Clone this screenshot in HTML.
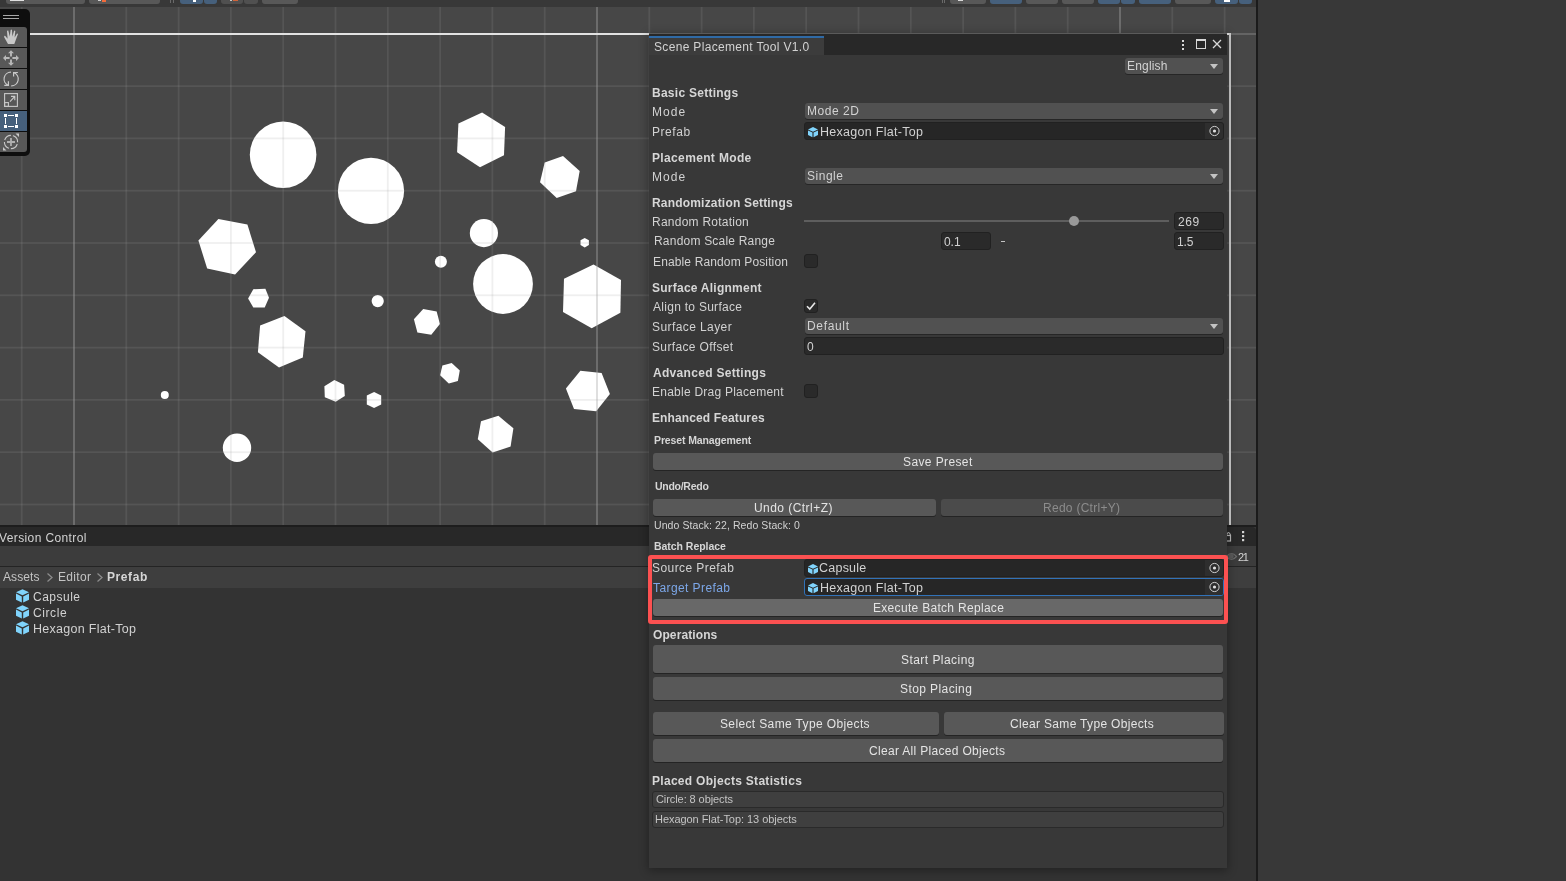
<!DOCTYPE html>
<html><head><meta charset="utf-8"><style>
*{box-sizing:border-box;margin:0;padding:0}
html,body{width:1566px;height:881px;overflow:hidden;background:#383838;font-family:"Liberation Sans",sans-serif;font-size:12px;color:#d2d2d2}
.a{position:absolute}
.t{position:absolute;white-space:pre;line-height:14px;will-change:transform}
.b{font-weight:bold}
.dd{position:absolute;background:#515151;border-radius:3px;box-shadow:0 1px 0 #262626}
.fld{position:absolute;background:#2a2a2a;border:1px solid #212121;border-radius:3px}
.btn{position:absolute;background:#585858;border-radius:3px;box-shadow:0 1px 0 #242424}
.arr{position:absolute;width:0;height:0;border-left:4.5px solid transparent;border-right:4.5px solid transparent;border-top:5px solid #c4c4c4}
</style></head><body>
<div class="a" style="left:0px;top:0px;width:1256px;height:7px;background:#383838;"></div>
<div class="a" style="left:6px;top:-3px;width:79px;height:7px;background:#585858;border-radius:3px"></div>
<div class="a" style="left:89px;top:-3px;width:71px;height:7px;background:#585858;border-radius:3px"></div>
<div class="a" style="left:180px;top:-3px;width:23px;height:7px;background:#46607c;border-radius:3px"></div>
<div class="a" style="left:204px;top:-3px;width:13px;height:7px;background:#46607c;border-radius:3px"></div>
<div class="a" style="left:221px;top:-3px;width:22px;height:7px;background:#505050;border-radius:3px"></div>
<div class="a" style="left:244px;top:-3px;width:14px;height:7px;background:#505050;border-radius:3px"></div>
<div class="a" style="left:262px;top:-3px;width:36px;height:7px;background:#585858;border-radius:3px"></div>
<div class="a" style="left:950px;top:-3px;width:36px;height:7px;background:#585858;border-radius:3px"></div>
<div class="a" style="left:990px;top:-3px;width:32px;height:7px;background:#46607c;border-radius:3px"></div>
<div class="a" style="left:1026px;top:-3px;width:32px;height:7px;background:#585858;border-radius:3px"></div>
<div class="a" style="left:1062px;top:-3px;width:32px;height:7px;background:#585858;border-radius:3px"></div>
<div class="a" style="left:1098px;top:-3px;width:22px;height:7px;background:#46607c;border-radius:3px"></div>
<div class="a" style="left:1121px;top:-3px;width:14px;height:7px;background:#46607c;border-radius:3px"></div>
<div class="a" style="left:1139px;top:-3px;width:32px;height:7px;background:#46607c;border-radius:3px"></div>
<div class="a" style="left:1175px;top:-3px;width:36px;height:7px;background:#585858;border-radius:3px"></div>
<div class="a" style="left:1215px;top:-3px;width:23px;height:7px;background:#46607c;border-radius:3px"></div>
<div class="a" style="left:1239px;top:-3px;width:13px;height:7px;background:#46607c;border-radius:3px"></div>
<div class="a" style="left:10px;top:0px;width:14px;height:1px;background:#e0e0e0;"></div>
<div class="a" style="left:98px;top:0px;width:3px;height:1px;background:#d0d0d0;"></div>
<div class="a" style="left:102px;top:0px;width:4px;height:1.5px;background:#f26b3a;"></div>
<div class="a" style="left:193px;top:0px;width:3px;height:1.5px;background:#ffffff;"></div>
<div class="a" style="left:170px;top:0px;width:1px;height:3px;background:#6a6a6a;"></div>
<div class="a" style="left:173px;top:0px;width:1px;height:3px;background:#6a6a6a;"></div>
<div class="a" style="left:230px;top:0px;width:2px;height:1px;background:#c8c8c8;"></div>
<div class="a" style="left:233px;top:0px;width:5px;height:1.2px;background:#d0643a;"></div>
<div class="a" style="left:958px;top:0px;width:5px;height:1.2px;background:#d8d8d8;"></div>
<div class="a" style="left:942px;top:0px;width:1px;height:3px;background:#6a6a6a;"></div>
<div class="a" style="left:944px;top:0px;width:1px;height:3px;background:#6a6a6a;"></div>
<div class="a" style="left:1224px;top:0px;width:6px;height:1.5px;background:#ffffff;"></div>
<svg class="a" style="left:0;top:7px" width="1256" height="518" viewBox="0 7 1256 518"><rect x="0" y="7" width="1256" height="518" fill="#474747"/><circle cx="283.1" cy="154.7" r="33.3" fill="#fff"/><circle cx="371" cy="190.9" r="33.1" fill="#fff"/><circle cx="483.9" cy="233.1" r="14.1" fill="#fff"/><circle cx="440.9" cy="261.8" r="6" fill="#fff"/><circle cx="377.7" cy="301.1" r="6.1" fill="#fff"/><circle cx="503" cy="284" r="29.9" fill="#fff"/><circle cx="164.8" cy="394.9" r="4" fill="#fff"/><circle cx="237" cy="447.8" r="14.2" fill="#fff"/><polygon fill="#fff" points="218.4,218.9 247.4,224.6 256,252.2 235.1,274.6 207.2,268.5 198.4,240.5"/><polygon fill="#fff" points="482.1,112.5 505.1,126.9 504,155.3 480,167.3 457.1,152.2 458.4,123.5"/><polygon fill="#fff" points="563,156.1 579.7,171 576,191.3 556.7,197.9 540,182.2 544.7,162.6"/><polygon fill="#fff" points="593.5,264.4 621,280 620.4,312.7 591.7,328.3 563,311.9 564,278.8"/><polygon fill="#fff" points="284.4,315.9 305.5,331.3 302.8,357.4 279,367.6 257.9,352.2 260.1,325.6"/><polygon fill="#fff" points="334.4,380.1 344.1,384.7 344.8,396 335.7,401.7 324.8,397.2 324.4,386.3"/><polygon fill="#fff" points="374.1,391.9 381.2,395.6 381.2,404.4 374.1,408 366.8,404.4 366.8,395.6"/><polygon fill="#fff" points="423.2,309.1 436.7,311.6 439.9,324.1 431.3,334.7 417.4,332.4 413.9,319.3"/><polygon fill="#fff" points="451.7,363.1 459.8,370.4 457.9,381 448.8,383.5 440.1,375.2 442.4,365.6"/><polygon fill="#fff" points="580.4,370.8 601.6,372.9 609.9,394 596.2,411.3 574,409 565.9,388.4"/><polygon fill="#fff" points="498.4,415.8 513.4,428.3 510.6,446.6 492.6,452.4 477.8,439.3 481,421.2"/><polygon fill="#fff" points="253.3,289.2 265.4,288.8 269,297.7 264.7,307.5 253.3,307.5 248.1,298.4"/><polygon fill="#fff" points="584.7,237.9 588.9,240.3 588.9,245.1 584.7,247.5 580.5,245.1 580.5,240.3"/><rect x="20.8" y="7" width="1.8" height="518" fill="rgba(155,155,155,0.165)"/><rect x="73.1" y="7" width="1.8" height="518" fill="rgba(170,170,170,0.42)"/><rect x="125.4" y="7" width="1.8" height="518" fill="rgba(155,155,155,0.165)"/><rect x="177.7" y="7" width="1.8" height="518" fill="rgba(155,155,155,0.165)"/><rect x="230.0" y="7" width="1.8" height="518" fill="rgba(155,155,155,0.165)"/><rect x="282.3" y="7" width="1.8" height="518" fill="rgba(155,155,155,0.165)"/><rect x="334.6" y="7" width="1.8" height="518" fill="rgba(155,155,155,0.165)"/><rect x="386.9" y="7" width="1.8" height="518" fill="rgba(155,155,155,0.165)"/><rect x="439.2" y="7" width="1.8" height="518" fill="rgba(155,155,155,0.165)"/><rect x="491.5" y="7" width="1.8" height="518" fill="rgba(155,155,155,0.165)"/><rect x="543.8" y="7" width="1.8" height="518" fill="rgba(155,155,155,0.165)"/><rect x="596.1" y="7" width="1.8" height="518" fill="rgba(170,170,170,0.42)"/><rect x="648.4" y="7" width="1.8" height="518" fill="rgba(155,155,155,0.165)"/><rect x="700.7" y="7" width="1.8" height="518" fill="rgba(155,155,155,0.165)"/><rect x="753.0" y="7" width="1.8" height="518" fill="rgba(155,155,155,0.165)"/><rect x="805.3" y="7" width="1.8" height="518" fill="rgba(155,155,155,0.165)"/><rect x="857.6" y="7" width="1.8" height="518" fill="rgba(155,155,155,0.165)"/><rect x="909.9" y="7" width="1.8" height="518" fill="rgba(155,155,155,0.165)"/><rect x="962.2" y="7" width="1.8" height="518" fill="rgba(155,155,155,0.165)"/><rect x="1014.5" y="7" width="1.8" height="518" fill="rgba(155,155,155,0.165)"/><rect x="1066.8" y="7" width="1.8" height="518" fill="rgba(155,155,155,0.165)"/><rect x="1119.1" y="7" width="1.8" height="518" fill="rgba(170,170,170,0.42)"/><rect x="1171.4" y="7" width="1.8" height="518" fill="rgba(155,155,155,0.165)"/><rect x="1223.7" y="7" width="1.8" height="518" fill="rgba(155,155,155,0.165)"/><rect x="0" y="85.2" width="1256" height="1.8" fill="rgba(155,155,155,0.165)"/><rect x="0" y="137.5" width="1256" height="1.8" fill="rgba(155,155,155,0.165)"/><rect x="0" y="189.8" width="1256" height="1.8" fill="rgba(155,155,155,0.165)"/><rect x="0" y="242.1" width="1256" height="1.8" fill="rgba(155,155,155,0.165)"/><rect x="0" y="294.4" width="1256" height="1.8" fill="rgba(155,155,155,0.165)"/><rect x="0" y="346.7" width="1256" height="1.8" fill="rgba(155,155,155,0.165)"/><rect x="0" y="399.0" width="1256" height="1.8" fill="rgba(155,155,155,0.165)"/><rect x="0" y="451.3" width="1256" height="1.8" fill="rgba(155,155,155,0.165)"/><rect x="0" y="503.6" width="1256" height="1.8" fill="rgba(155,155,155,0.165)"/><rect x="0" y="33" width="1256" height="2" fill="rgba(170,170,170,0.30)"/><rect x="30" y="33" width="1201" height="2" fill="#e2e2e2"/><rect x="1229" y="33" width="2" height="492" fill="#cfcfcf"/></svg>
<div class="a" style="left:0px;top:9px;width:30px;height:147px;background:#0e0e0e;border-radius:0 5px 5px 0"></div>
<div class="a" style="left:3px;top:15px;width:16px;height:1px;background:#a8a8a8;"></div>
<div class="a" style="left:3px;top:18px;width:16px;height:1px;background:#a8a8a8;"></div>
<div class="a" style="left:0px;top:27px;width:27px;height:20px;background:#585858;border-radius:0 3px 0 0"></div>
<div class="a" style="left:0px;top:48px;width:27px;height:20px;background:#585858;border-radius:0"></div>
<div class="a" style="left:0px;top:69px;width:27px;height:20px;background:#585858;border-radius:0"></div>
<div class="a" style="left:0px;top:90px;width:27px;height:20px;background:#585858;border-radius:0"></div>
<div class="a" style="left:0px;top:111px;width:27px;height:20px;background:#46607c;border-radius:0"></div>
<div class="a" style="left:0px;top:132px;width:27px;height:20px;background:#585858;border-radius:0 0 3px 0"></div>
<svg class="a" style="left:0;top:0" width="30" height="160"><path d="M8 44 L4.2 37.2 Q3.8 35.6 5.3 35.9 L7.6 38.8 L7 31.2 Q7.3 30 8.3 30.6 L9.8 36.5 L10.6 29.9 Q11.3 29 12 29.9 L12.4 36.5 L14 31 Q14.7 30.2 15.3 31 L14.6 37.5 L16.9 33.8 Q17.7 33.2 18 34.1 L15.6 40.5 L14.3 44 Z" fill="#c8c8c8"/><g stroke="#b8b8b8" stroke-width="1.9" fill="none" stroke-linecap="butt"><path d="M11 52 L11 56.6 M11 59.4 L11 64 M5 58 L9.6 58 M12.4 58 L17 58"/></g><g fill="#b8b8b8"><path d="M11 50.2 L14 53.2 L8 53.2Z M11 65.8 L14 62.8 L8 62.8Z M3 58 L6 55 L6 61Z M19 58 L16 55 L16 61Z"/></g><g stroke="#c8c8c8" stroke-width="1.2" fill="none"><path d="M11 72.2 A6.8 6.8 0 0 0 8.3 85.3"/><path d="M4.3 85.4 L8.4 85.4 L8.4 81.3"/><path d="M11.2 85.8 A6.8 6.8 0 0 0 13.7 72.6"/><path d="M17.9 72.5 L13.6 72.5 L13.6 76.4"/></g><g stroke="#c8c8c8" stroke-width="1.1" fill="none"><rect x="4.6" y="93.6" width="12.8" height="12.8"/><rect x="4.6" y="102.6" width="3.8" height="3.8"/><path d="M10 101.6 L14.6 96.6 M11 96.4 L14.8 96.4 L14.8 100.2"/></g><g fill="#fff"><rect x="4" y="114" width="3" height="3"/><rect x="15" y="114" width="3" height="3"/><rect x="4" y="125" width="3" height="3"/><rect x="15" y="125" width="3" height="3"/><rect x="8" y="115" width="6" height="1"/><rect x="8" y="126" width="6" height="1"/><rect x="5" y="118" width="1" height="6"/><rect x="16" y="118" width="1" height="6"/></g><g stroke="#c8c8c8" stroke-width="1.1" fill="none" stroke-dasharray="8.2 2"><circle cx="11" cy="142" r="6.6" transform="rotate(-70 11 142)"/></g><g stroke="#b0b0b0" stroke-width="1.8"><path d="M11 138 L11 146 M7 142 L15 142"/></g><g fill="#c8c8c8"><path d="M3 150.5 L3 147 L6.5 150.5Z M19 133.5 L19 137 L15.5 133.5Z"/></g></svg>
<div class="a" style="left:1256px;top:0px;width:2px;height:881px;background:#1b1b1b;"></div>
<div class="a" style="left:1258px;top:0px;width:308px;height:881px;background:#383838;"></div>
<div class="a" style="left:0px;top:525px;width:1256px;height:2px;background:#1d1d1d;"></div>
<div class="a" style="left:0px;top:527px;width:1256px;height:19px;background:#282828;border-top-right-radius:4px"></div>
<div class="a" style="left:0px;top:546px;width:1256px;height:20px;background:#3c3c3c;"></div>
<div class="a" style="left:0px;top:566px;width:1256px;height:1px;background:#242424;"></div>
<div class="a" style="left:0px;top:567px;width:1256px;height:21px;background:#3e3e3e;"></div>
<div class="a" style="left:0px;top:588px;width:1256px;height:293px;background:#333333;"></div>
<svg class="a" style="left:0;top:560px" width="120" height="30"><path d="M47.5 13.5 L52 17.5 L47.5 21.5 M97.5 13.5 L102 17.5 L97.5 21.5" stroke="#8c8c8c" stroke-width="1.3" fill="none"/></svg>
<svg class="a" style="left:1220px;top:525px" width="36" height="45"><path d="M6.5 10 Q8.5 5 10.5 10" stroke="#bbb" stroke-width="1.2" fill="none"/><rect x="5.5" y="10.5" width="5" height="5.5" stroke="#bbb" stroke-width="1.2" fill="none"/><rect x="22" y="6" width="2.2" height="2.2" fill="#d2d2d2"/><rect x="22" y="10" width="2.2" height="2.2" fill="#d2d2d2"/><rect x="22" y="14" width="2.2" height="2.2" fill="#d2d2d2"/><path d="M6.5 31.5 Q11.5 25.5 16.5 31.5 Q11.5 37.5 6.5 31.5Z" stroke="#6a6a6a" stroke-width="1.2" fill="none"/><circle cx="11" cy="31.2" r="2.6" fill="#5a5a5a"/></svg>
<svg class="a" style="left:0;top:0" width="40" height="881"><polygon fill="#80d4fc" points="22.50,589.20 29.00,592.32 22.50,595.31 16.00,592.32"/><polygon fill="#80d4fc" points="16.00,593.62 21.79,596.48 21.79,602.59 16.00,599.73"/><polygon fill="#80d4fc" points="23.21,596.48 29.00,593.62 29.00,599.73 23.21,602.59"/><polygon fill="#80d4fc" points="22.50,605.20 29.00,608.32 22.50,611.31 16.00,608.32"/><polygon fill="#80d4fc" points="16.00,609.62 21.79,612.48 21.79,618.59 16.00,615.73"/><polygon fill="#80d4fc" points="23.21,612.48 29.00,609.62 29.00,615.73 23.21,618.59"/><polygon fill="#80d4fc" points="22.50,621.20 29.00,624.32 22.50,627.31 16.00,624.32"/><polygon fill="#80d4fc" points="16.00,625.62 21.79,628.48 21.79,634.59 16.00,631.73"/><polygon fill="#80d4fc" points="23.21,628.48 29.00,625.62 29.00,631.73 23.21,634.59"/></svg>
<div class="a" style="left:649px;top:33px;width:578px;height:835px;background:#383838;box-shadow:0 2px 9px 1px rgba(0,0,0,0.32)"></div>
<div class="a" style="left:649px;top:33px;width:578px;height:1px;background:#5a5a5a;"></div>
<div class="a" style="left:649px;top:34px;width:578px;height:21px;background:#282828;"></div>
<div class="a" style="left:649px;top:38px;width:175px;height:17px;background:#3c3c3c;"></div>
<div class="a" style="left:649px;top:36px;width:175px;height:2px;background:#2f6aa6;"></div>
<svg class="a" style="left:1176px;top:34px" width="52" height="21"><rect x="6" y="6" width="2" height="2" fill="#d8d8d8"/><rect x="6" y="10" width="2" height="2" fill="#d8d8d8"/><rect x="6" y="14" width="2" height="2" fill="#d8d8d8"/><rect x="20.5" y="5.5" width="9" height="9" stroke="#d8d8d8" stroke-width="1" fill="none"/><rect x="20" y="5" width="10" height="2" fill="#d8d8d8"/><path d="M37 6 L45 14 M45 6 L37 14" stroke="#d8d8d8" stroke-width="1.3"/></svg>
<div class="dd" style="left:1125px;top:58px;width:98px;height:16px"></div>
<div class="arr" style="left:1210px;top:64px"></div>
<div class="dd" style="left:805px;top:103px;width:418px;height:16px"></div>
<div class="arr" style="left:1210px;top:109px"></div>
<div class="a" style="left:804px;top:122px;width:420px;height:18px;background:#262626;border:1px solid #212121;border-radius:3px"></div>
<div class="a" style="left:1205px;top:123px;width:18px;height:16px;background:#2e2e2e;border-radius:0 2px 2px 0"></div>
<svg class="a" style="left:1205px;top:122px" width="19" height="18"><circle cx="9.5" cy="9.0" r="4.6" stroke="#d0d0d0" stroke-width="1" fill="none"/><circle cx="9.5" cy="9.0" r="1.6" fill="#e0e0e0"/></svg>
<svg class="a" style="left:808px;top:127px" width="11" height="11"><polygon fill="#80d4fc" points="5.00,0.00 10.00,2.40 5.00,4.70 0.00,2.40"/><polygon fill="#80d4fc" points="0.00,3.40 4.45,5.60 4.45,10.30 0.00,8.10"/><polygon fill="#80d4fc" points="5.55,5.60 10.00,3.40 10.00,8.10 5.55,10.30"/></svg>
<div class="dd" style="left:805px;top:168px;width:418px;height:16px"></div>
<div class="arr" style="left:1210px;top:174px"></div>
<div class="a" style="left:804px;top:220px;width:365px;height:2px;background:#5e5e5e;"></div>
<div class="a" style="left:1068.8px;top:215.8px;width:10.2px;height:10.2px;border-radius:50%;background:#999999"></div>
<div class="fld" style="left:1174px;top:212px;width:50px;height:18px"></div>
<div class="fld" style="left:941px;top:232px;width:50px;height:18px"></div>
<div class="a" style="left:1001px;top:241px;width:4px;height:1px;background:#c4c4c4;"></div>
<div class="fld" style="left:1174px;top:232px;width:50px;height:18px"></div>
<div class="fld" style="left:804px;top:254px;width:14px;height:14px"></div>
<div class="fld" style="left:804px;top:299px;width:14px;height:14px"></div>
<svg class="a" style="left:804px;top:299px" width="14" height="14"><path d="M3 7.2 L5.8 10 L11 3.8" stroke="#e8e8e8" stroke-width="1.6" fill="none"/></svg>
<div class="dd" style="left:805px;top:318px;width:418px;height:16px"></div>
<div class="arr" style="left:1210px;top:324px"></div>
<div class="fld" style="left:804px;top:337px;width:420px;height:18px"></div>
<div class="fld" style="left:804px;top:384px;width:14px;height:14px"></div>
<div class="btn" style="left:653px;top:453px;width:570px;height:17px;background:#585858"></div>
<div class="btn" style="left:653px;top:499px;width:283px;height:17px;background:#585858"></div>
<div class="btn" style="left:941px;top:499px;width:282px;height:17px;background:#4b4b4b"></div>
<div class="a" style="left:648px;top:555px;width:580px;height:69px;border:4px solid #fc5151;border-radius:3px"></div>
<div class="a" style="left:804px;top:559px;width:420px;height:18px;background:#262626;border:1px solid #212121;border-radius:3px"></div>
<div class="a" style="left:1205px;top:560px;width:18px;height:16px;background:#2e2e2e;border-radius:0 2px 2px 0"></div>
<svg class="a" style="left:1205px;top:559px" width="19" height="18"><circle cx="9.5" cy="9.0" r="4.6" stroke="#d0d0d0" stroke-width="1" fill="none"/><circle cx="9.5" cy="9.0" r="1.6" fill="#e0e0e0"/></svg>
<svg class="a" style="left:808px;top:564px" width="11" height="11"><polygon fill="#80d4fc" points="5.00,0.00 10.00,2.40 5.00,4.70 0.00,2.40"/><polygon fill="#80d4fc" points="0.00,3.40 4.45,5.60 4.45,10.30 0.00,8.10"/><polygon fill="#80d4fc" points="5.55,5.60 10.00,3.40 10.00,8.10 5.55,10.30"/></svg>
<div class="a" style="left:804px;top:578px;width:420px;height:18px;background:#262626;border:1px solid #3172b8;border-radius:3px"></div>
<div class="a" style="left:1205px;top:579px;width:18px;height:16px;background:#2e2e2e;border-radius:0 2px 2px 0"></div>
<svg class="a" style="left:1205px;top:578px" width="19" height="18"><circle cx="9.5" cy="9.0" r="4.6" stroke="#d0d0d0" stroke-width="1" fill="none"/><circle cx="9.5" cy="9.0" r="1.6" fill="#e0e0e0"/></svg>
<svg class="a" style="left:808px;top:583px" width="11" height="11"><polygon fill="#80d4fc" points="5.00,0.00 10.00,2.40 5.00,4.70 0.00,2.40"/><polygon fill="#80d4fc" points="0.00,3.40 4.45,5.60 4.45,10.30 0.00,8.10"/><polygon fill="#80d4fc" points="5.55,5.60 10.00,3.40 10.00,8.10 5.55,10.30"/></svg>
<div class="btn" style="left:653px;top:599px;width:570px;height:17px;background:#686868"></div>
<div class="btn" style="left:653px;top:645px;width:570px;height:28px;background:#585858"></div>
<div class="btn" style="left:653px;top:677px;width:570px;height:23px;background:#585858"></div>
<div class="btn" style="left:653px;top:712px;width:286px;height:23px;background:#585858"></div>
<div class="btn" style="left:944px;top:712px;width:280px;height:23px;background:#585858"></div>
<div class="btn" style="left:653px;top:739px;width:570px;height:23px;background:#585858"></div>
<div class="a" style="left:652px;top:791px;width:572px;height:17px;background:#3f3f3f;border:1px solid #2a2a2a;border-radius:3px"></div>
<div class="a" style="left:652px;top:811px;width:572px;height:17px;background:#3f3f3f;border:1px solid #2a2a2a;border-radius:3px"></div>
<div class="t" style="left:654.40px;top:40px;font-size:12px;color:#d2d2d2;letter-spacing:0.329px;">Scene Placement Tool V1.0</div>
<div class="t" style="left:1127.40px;top:59px;font-size:12px;color:#d2d2d2;letter-spacing:0.183px;">English</div>
<div class="t" style="left:652.20px;top:86px;font-size:12px;color:#d6d6d6;letter-spacing:0.262px;font-weight:700;">Basic Settings</div>
<div class="t" style="left:652.20px;top:105px;font-size:12px;color:#d2d2d2;letter-spacing:1.067px;">Mode</div>
<div class="t" style="left:807.00px;top:104px;font-size:12px;color:#d2d2d2;letter-spacing:0.517px;">Mode 2D</div>
<div class="t" style="left:652.20px;top:125px;font-size:12px;color:#d2d2d2;letter-spacing:0.560px;">Prefab</div>
<div class="t" style="left:819.70px;top:125px;font-size:12.5px;color:#d2d2d2;letter-spacing:0.293px;">Hexagon Flat-Top</div>
<div class="t" style="left:652.20px;top:151px;font-size:12px;color:#d6d6d6;letter-spacing:0.354px;font-weight:700;">Placement Mode</div>
<div class="t" style="left:652.20px;top:170px;font-size:12px;color:#d2d2d2;letter-spacing:1.067px;">Mode</div>
<div class="t" style="left:807.00px;top:169px;font-size:12px;color:#d2d2d2;letter-spacing:0.520px;">Single</div>
<div class="t" style="left:652.20px;top:196px;font-size:12px;color:#d6d6d6;letter-spacing:0.186px;font-weight:700;">Randomization Settings</div>
<div class="t" style="left:652.20px;top:215px;font-size:12px;color:#d2d2d2;letter-spacing:0.243px;">Random Rotation</div>
<div class="t" style="left:1177.70px;top:215px;font-size:12px;color:#d2d2d2;letter-spacing:0.550px;">269</div>
<div class="t" style="left:654.20px;top:234px;font-size:12px;color:#d2d2d2;letter-spacing:0.206px;">Random Scale Range</div>
<div class="t" style="left:944.40px;top:235px;font-size:12px;color:#d2d2d2;letter-spacing:-0.050px;">0.1</div>
<div class="t" style="left:1176.70px;top:235px;font-size:12px;color:#d2d2d2;letter-spacing:-0.100px;">1.5</div>
<div class="t" style="left:652.60px;top:255px;font-size:12px;color:#d2d2d2;letter-spacing:0.133px;">Enable Random Position</div>
<div class="t" style="left:652.20px;top:281px;font-size:12px;color:#d6d6d6;letter-spacing:0.244px;font-weight:700;">Surface Alignment</div>
<div class="t" style="left:653.20px;top:300px;font-size:12px;color:#d2d2d2;letter-spacing:0.280px;">Align to Surface</div>
<div class="t" style="left:652.20px;top:320px;font-size:12px;color:#d2d2d2;letter-spacing:0.417px;">Surface Layer</div>
<div class="t" style="left:807.00px;top:319px;font-size:12px;color:#d2d2d2;letter-spacing:0.667px;">Default</div>
<div class="t" style="left:652.20px;top:340px;font-size:12px;color:#d2d2d2;letter-spacing:0.362px;">Surface Offset</div>
<div class="t" style="left:807.40px;top:340px;font-size:12px;color:#d2d2d2;letter-spacing:0.000px;">0</div>
<div class="t" style="left:653.20px;top:366px;font-size:12px;color:#d6d6d6;letter-spacing:0.306px;font-weight:700;">Advanced Settings</div>
<div class="t" style="left:652.20px;top:385px;font-size:12px;color:#d2d2d2;letter-spacing:0.240px;">Enable Drag Placement</div>
<div class="t" style="left:652.20px;top:411px;font-size:12px;color:#d6d6d6;letter-spacing:0.119px;font-weight:700;">Enhanced Features</div>
<div class="t" style="left:654.20px;top:433px;font-size:10.5px;color:#d6d6d6;letter-spacing:-0.119px;font-weight:700;">Preset Management</div>
<div class="t" style="left:903.30px;top:455px;font-size:12px;color:#e4e4e4;letter-spacing:0.390px;">Save Preset</div>
<div class="t" style="left:655.20px;top:479px;font-size:10.5px;color:#d6d6d6;letter-spacing:-0.275px;font-weight:700;">Undo/Redo</div>
<div class="t" style="left:754.30px;top:501px;font-size:12px;color:#e4e4e4;letter-spacing:0.450px;">Undo (Ctrl+Z)</div>
<div class="t" style="left:1043.00px;top:501px;font-size:12px;color:#8c8c8c;letter-spacing:0.275px;">Redo (Ctrl+Y)</div>
<div class="t" style="left:653.60px;top:518px;font-size:10.5px;color:#d2d2d2;letter-spacing:0.082px;">Undo Stack: 22, Redo Stack: 0</div>
<div class="t" style="left:654.20px;top:539px;font-size:10.5px;color:#d6d6d6;letter-spacing:-0.042px;font-weight:700;">Batch Replace</div>
<div class="t" style="left:652.20px;top:561px;font-size:12px;color:#d2d2d2;letter-spacing:0.425px;">Source Prefab</div>
<div class="t" style="left:819.30px;top:561px;font-size:12.5px;color:#d2d2d2;letter-spacing:0.233px;">Capsule</div>
<div class="t" style="left:653.20px;top:581px;font-size:12px;color:#7ca7e8;letter-spacing:0.417px;">Target Prefab</div>
<div class="t" style="left:819.70px;top:581px;font-size:12.5px;color:#d2d2d2;letter-spacing:0.293px;">Hexagon Flat-Top</div>
<div class="t" style="left:872.50px;top:601px;font-size:12px;color:#e4e4e4;letter-spacing:0.305px;">Execute Batch Replace</div>
<div class="t" style="left:653.30px;top:628px;font-size:12px;color:#d6d6d6;letter-spacing:0.100px;font-weight:700;">Operations</div>
<div class="t" style="left:901.30px;top:653px;font-size:12px;color:#e4e4e4;letter-spacing:0.450px;">Start Placing</div>
<div class="t" style="left:900.40px;top:682px;font-size:12px;color:#e4e4e4;letter-spacing:0.409px;">Stop Placing</div>
<div class="t" style="left:719.50px;top:717px;font-size:12px;color:#e4e4e4;letter-spacing:0.365px;">Select Same Type Objects</div>
<div class="t" style="left:1010.40px;top:717px;font-size:12px;color:#e4e4e4;letter-spacing:0.327px;">Clear Same Type Objects</div>
<div class="t" style="left:868.50px;top:744px;font-size:12px;color:#e4e4e4;letter-spacing:0.317px;">Clear All Placed Objects</div>
<div class="t" style="left:652.30px;top:774px;font-size:12px;color:#d6d6d6;letter-spacing:0.296px;font-weight:700;">Placed Objects Statistics</div>
<div class="t" style="left:656.30px;top:792px;font-size:11px;color:#c4c4c4;letter-spacing:-0.081px;">Circle: 8 objects</div>
<div class="t" style="left:655.30px;top:812px;font-size:11px;color:#c4c4c4;letter-spacing:-0.052px;">Hexagon Flat-Top: 13 objects</div>
<div class="t" style="left:-0.80px;top:531px;font-size:12px;color:#d2d2d2;letter-spacing:0.379px;">Version Control</div>
<div class="t" style="left:3.30px;top:570px;font-size:12px;color:#c4c4c4;letter-spacing:0.100px;">Assets</div>
<div class="t" style="left:57.50px;top:570px;font-size:12px;color:#c4c4c4;letter-spacing:0.320px;">Editor</div>
<div class="t" style="left:107.40px;top:570px;font-size:12px;color:#d6d6d6;letter-spacing:0.580px;font-weight:700;">Prefab</div>
<div class="t" style="left:32.60px;top:590px;font-size:12px;color:#d2d2d2;letter-spacing:0.500px;">Capsule</div>
<div class="t" style="left:32.60px;top:606px;font-size:12px;color:#d2d2d2;letter-spacing:0.580px;">Circle</div>
<div class="t" style="left:32.60px;top:622px;font-size:12.5px;color:#d2d2d2;letter-spacing:0.287px;">Hexagon Flat-Top</div>
<div class="t" style="left:1238.00px;top:550px;font-size:11px;color:#d2d2d2;letter-spacing:-1.400px;">21</div>
</body></html>
